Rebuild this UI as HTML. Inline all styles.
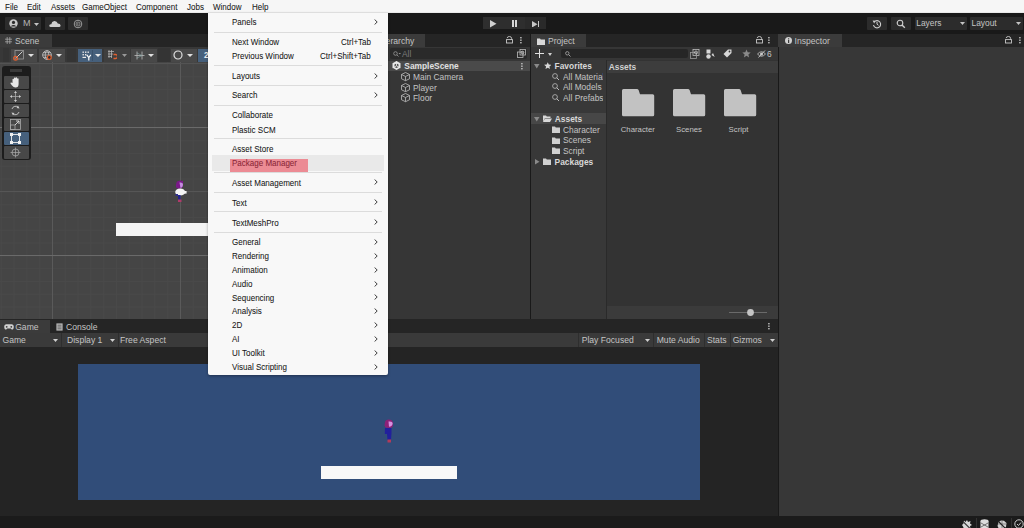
<!DOCTYPE html>
<html><head><meta charset="utf-8">
<style>
*{margin:0;padding:0;box-sizing:border-box}
html,body{width:1024px;height:528px;overflow:hidden;background:#191919;font-family:"Liberation Sans",sans-serif;font-size:8.4px;color:#c4c4c4}
.a{position:absolute}
.t{position:absolute;white-space:nowrap;line-height:10px}
.m{color:#151515;font-size:8.8px;transform:scaleX(0.91);transform-origin:0 0;-webkit-text-stroke:0.05px currentColor}
.mr{transform-origin:100% 0}
.sep{position:absolute;height:1px;background:#dcdcdc;left:6px;width:168px}
.ar{position:absolute;left:166px}
</style></head><body>
<div class="a" style="left:0px;top:0px;width:1024px;height:13px;background:#f6f6f6"></div>
<div class="a" style="left:0px;top:12px;width:1024px;height:1px;background:#e9e9e9"></div>
<div class="t m" style="left:5px;top:2px">File</div>
<div class="t m" style="left:27px;top:2px">Edit</div>
<div class="t m" style="left:51px;top:2px">Assets</div>
<div class="t m" style="left:82px;top:2px">GameObject</div>
<div class="t m" style="left:136px;top:2px">Component</div>
<div class="t m" style="left:187px;top:2px">Jobs</div>
<div class="t m" style="left:213px;top:2px">Window</div>
<div class="t m" style="left:252px;top:2px">Help</div>
<div class="a" style="left:0px;top:13px;width:1024px;height:21px;background:#191919"></div>
<div class="a" style="left:5px;top:17px;width:36px;height:13px;background:#2c2c2c;border-radius:1px"></div>
<svg class="a" style="left:9px;top:19px;" width="9" height="9" viewBox="0 0 9 9"><circle cx="4.5" cy="4.5" r="4.2" fill="#c8c8c8"/><circle cx="4.5" cy="3.4" r="1.6" fill="#2c2c2c"/><path d="M1.6 7.4 Q4.5 4.6 7.4 7.4" fill="#2c2c2c"/></svg>
<div class="t" style="left:23px;top:18px;color:#b4b4b4;font-size:9px">M</div>
<svg class="a" style="left:34px;top:22.5px;" width="5" height="3" viewBox="0 0 5 3"><path d="M0 0 H5 L2.5 3 Z" fill="#c4c4c4"/></svg>
<div class="a" style="left:44.5px;top:17px;width:20px;height:13px;background:#2c2c2c;border-radius:1px"></div>
<svg class="a" style="left:49px;top:19px;" width="12" height="9" viewBox="0 0 12 9"><path d="M1.5 8 Q0 8 0.3 6.3 Q0.8 5 2.3 5.2 Q2.6 2.4 5.3 2.1 Q8 2 8.8 4.6 Q11.5 4.6 11.6 6.5 Q11.6 8 10 8 Z" fill="#cfcfcf"/></svg>
<div class="a" style="left:68px;top:17px;width:20px;height:13px;background:#2c2c2c;border-radius:1px"></div>
<svg class="a" style="left:73px;top:18.5px;" width="10" height="10" viewBox="0 0 10 10"><circle cx="5" cy="5" r="3.8" fill="none" stroke="#9a9a9a" stroke-width="1"/><circle cx="5" cy="5" r="2" fill="none" stroke="#9a9a9a" stroke-width="0.8"/><path d="M4.3 4 L6 5 L4.3 6 Z" fill="#9a9a9a"/></svg>
<div class="a" style="left:483px;top:17px;width:21px;height:12px;background:#2e2e2e"></div>
<div class="a" style="left:504px;top:17px;width:21px;height:12px;background:#2e2e2e"></div>
<div class="a" style="left:525px;top:17px;width:21px;height:12px;background:#2a2a2a"></div>
<svg class="a" style="left:489.5px;top:20px;" width="7" height="7.5" viewBox="0 0 7 7.5"><path d="M0 0 L6.5 3.75 L0 7.5 Z" fill="#d0d0d0"/></svg>
<div class="a" style="left:512px;top:20.2px;width:2px;height:7px;background:#d6d6d6"></div>
<div class="a" style="left:515.3px;top:20.2px;width:2px;height:7px;background:#d6d6d6"></div>
<svg class="a" style="left:532px;top:20.5px;" width="6" height="6.5" viewBox="0 0 6 6.5"><path d="M0 0 L5.5 3.25 L0 6.5 Z" fill="#c8c8c8"/></svg>
<div class="a" style="left:538.2px;top:20.5px;width:1.3px;height:6.5px;background:#c8c8c8"></div>
<div class="a" style="left:867px;top:17px;width:20px;height:12.5px;background:#2c2c2c;border-radius:1px"></div>
<svg class="a" style="left:872px;top:18.5px;" width="10" height="10" viewBox="0 0 10 10"><path d="M2.2 3 A3.6 3.6 0 1 1 1.5 6" fill="none" stroke="#cfcfcf" stroke-width="1.1"/><path d="M0.6 1.6 L3.4 1.8 L2.2 4.4 Z" fill="#cfcfcf"/><path d="M5 3 V5.2 L6.5 6.3" fill="none" stroke="#cfcfcf" stroke-width="1"/></svg>
<div class="a" style="left:891px;top:17px;width:20px;height:12.5px;background:#2c2c2c;border-radius:1px"></div>
<svg class="a" style="left:896px;top:18.5px;" width="10" height="10" viewBox="0 0 10 10"><circle cx="4" cy="4" r="2.8" fill="none" stroke="#cfcfcf" stroke-width="1.1"/><path d="M6 6 L8.8 8.8" stroke="#cfcfcf" stroke-width="1.4"/></svg>
<div class="a" style="left:914.5px;top:17px;width:52px;height:12.5px;background:#2c2c2c;border-radius:1px"></div>
<div class="t" style="left:916.3px;top:18.3px;color:#c4c4c4;font-size:8.4px">Layers</div>
<svg class="a" style="left:959.5px;top:22px;" width="5" height="3" viewBox="0 0 5 3"><path d="M0 0 H5 L2.5 3 Z" fill="#c4c4c4"/></svg>
<div class="a" style="left:970.3px;top:17px;width:52.5px;height:12.5px;background:#2c2c2c;border-radius:1px"></div>
<div class="t" style="left:971.5px;top:18.3px;color:#c4c4c4;font-size:8.4px">Layout</div>
<svg class="a" style="left:1015.5px;top:22px;" width="5" height="3" viewBox="0 0 5 3"><path d="M0 0 H5 L2.5 3 Z" fill="#c4c4c4"/></svg>
<div class="a" style="left:0px;top:34px;width:362px;height:13px;background:#252525"></div>
<div class="a" style="left:0px;top:34px;width:51.5px;height:13px;background:#3b3b3b"></div>
<svg class="a" style="left:5px;top:37px;" width="7" height="7" viewBox="0 0 7 7"><path d="M2.2 0 V7 M4.8 0 V7 M0 2.2 H7 M0 4.8 H7" stroke="#bdbdbd" stroke-width="0.65"/></svg>
<div class="t" style="left:15px;top:35.6px;color:#c4c4c4;font-size:8.6px">Scene</div>
<div class="a" style="left:0px;top:47px;width:362px;height:15px;background:#383838"></div>
<div class="a" style="left:3px;top:48px;width:6px;height:14px;background:#343434"></div>
<div class="a" style="left:11px;top:48.6px;width:26px;height:13px;background:#484848"></div>
<svg class="a" style="left:13px;top:50px;" width="11" height="11" viewBox="0 0 11 11"><rect x="2" y="0.5" width="8.5" height="8.5" fill="none" stroke="#9b9b9b" stroke-width="0.8"/><path d="M3 8 L9.5 1.5" stroke="#dcdcdc" stroke-width="0.9"/><circle cx="2.6" cy="8.3" r="1.9" fill="none" stroke="#e06030" stroke-width="1.2"/></svg>
<svg class="a" style="left:28px;top:53.5px;" width="6" height="3" viewBox="0 0 6 3"><path d="M0 0 H6 L3.0 3 Z" fill="#e0e0e0"/></svg>
<div class="a" style="left:38.6px;top:48.6px;width:26px;height:13px;background:#484848"></div>
<svg class="a" style="left:41.5px;top:50px;" width="11" height="11" viewBox="0 0 11 11"><circle cx="5" cy="5" r="4.3" fill="none" stroke="#d0d0d0" stroke-width="0.8"/><ellipse cx="5" cy="5" rx="1.8" ry="4.3" fill="none" stroke="#d0d0d0" stroke-width="0.7"/><path d="M0.7 5 H9.3 M1.5 2.6 H8.5 M1.5 7.4 H8.5" stroke="#d0d0d0" stroke-width="0.6"/><circle cx="7.3" cy="7.4" r="1.9" fill="#2a2a2a" stroke="#e06030" stroke-width="1.2"/></svg>
<svg class="a" style="left:56px;top:53.5px;" width="6" height="3" viewBox="0 0 6 3"><path d="M0 0 H6 L3.0 3 Z" fill="#e0e0e0"/></svg>
<div class="a" style="left:67px;top:48px;width:9px;height:14px;background:#343434"></div>
<div class="a" style="left:78px;top:48.6px;width:24px;height:13px;background:#46607c"></div>
<div class="a" style="left:92px;top:49.5px;width:0.6px;height:11px;background:#3a526c"></div>
<svg class="a" style="left:81.5px;top:50.5px;" width="10" height="10" viewBox="0 0 10 10"><g fill="#e8e8e8"><rect x="0.5" y="0.5" width="1.4" height="1.4"/><rect x="3" y="0.5" width="1.4" height="1.4"/><rect x="5.5" y="0.5" width="1.4" height="1.4"/><rect x="0.5" y="3" width="1.4" height="1.4"/><rect x="3" y="3" width="1.4" height="1.4"/><rect x="0.5" y="5.8" width="3.5" height="1.2"/></g><path d="M4.8 3.8 L6.8 6.5 L8.8 3.8 M6.8 6.5 V9.5" fill="none" stroke="#fff" stroke-width="1.2"/></svg>
<svg class="a" style="left:94.5px;top:53.5px;" width="6" height="3" viewBox="0 0 6 3"><path d="M0 0 H6 L3.0 3 Z" fill="#e8e8e8"/></svg>
<div class="a" style="left:104px;top:48.6px;width:25.5px;height:13px;background:#3f3f3f"></div>
<svg class="a" style="left:107px;top:50px;" width="10" height="10" viewBox="0 0 10 10"><path d="M1 1.5 H7 M1 4 H6 M1 6.5 H5 M2 0 V8 M4.5 0 V8" stroke="#bbb" stroke-width="0.7"/><path d="M6.5 4.5 H8.5 A1.8 1.8 0 0 1 8.5 8.5 H6.5" fill="none" stroke="#e06030" stroke-width="1.3"/></svg>
<svg class="a" style="left:122px;top:54px;" width="5" height="3" viewBox="0 0 5 3"><path d="M0 0 H5 L2.5 3 Z" fill="#999"/></svg>
<div class="a" style="left:131px;top:48.6px;width:26px;height:13px;background:#484848"></div>
<svg class="a" style="left:133.5px;top:50.5px;" width="11" height="9" viewBox="0 0 11 9"><path d="M0.5 4.5 H10.5 M3 0.5 V8.5 M8 0.5 V8.5" stroke="#bbb" stroke-width="0.8"/><path d="M3 2 L8 4.5 L3 7" fill="none" stroke="#8aa" stroke-width="0.6"/></svg>
<svg class="a" style="left:148px;top:53.5px;" width="6" height="3" viewBox="0 0 6 3"><path d="M0 0 H6 L3.0 3 Z" fill="#e0e0e0"/></svg>
<div class="a" style="left:158px;top:48px;width:12px;height:14px;background:#343434"></div>
<div class="a" style="left:170.5px;top:48.6px;width:26px;height:13px;background:#484848"></div>
<svg class="a" style="left:172.5px;top:50px;" width="10" height="10" viewBox="0 0 10 10"><circle cx="5" cy="5" r="4" fill="none" stroke="#e0e0e0" stroke-width="1.2"/></svg>
<svg class="a" style="left:187px;top:53.5px;" width="6" height="3" viewBox="0 0 6 3"><path d="M0 0 H6 L3.0 3 Z" fill="#e0e0e0"/></svg>
<div class="a" style="left:198px;top:48.6px;width:12px;height:13px;background:#46607c"></div>
<div class="t" style="left:204px;top:50px;color:#f0f0f0;font-size:8.4px;font-weight:bold">2D</div>
<div class="a" style="left:0px;top:62px;width:362px;height:257px;background:#454545;background-image:linear-gradient(to right,#494949 1px,transparent 1px),linear-gradient(to bottom,#494949 1px,transparent 1px);background-size:12.8px 12.8px;background-position:0.8px 1.4px"></div>
<div class="a" style="left:52px;top:62px;width:1px;height:257px;background:#5a5a5a"></div>
<div class="a" style="left:180px;top:62px;width:1px;height:257px;background:#5a5a5a"></div>
<div class="a" style="left:308px;top:62px;width:1px;height:257px;background:#5a5a5a"></div>
<div class="a" style="left:0px;top:63px;width:362px;height:1px;background:#535353"></div>
<div class="a" style="left:0px;top:127px;width:362px;height:1px;background:#6a6a6a"></div>
<div class="a" style="left:0px;top:191px;width:362px;height:1px;background:#565656"></div>
<div class="a" style="left:0px;top:255px;width:362px;height:1px;background:#6a6a6a"></div>
<div class="a" style="left:116px;top:223px;width:246px;height:13px;background:#f4f4f4"></div>
<svg class="a" style="left:174.5px;top:179.5px;" width="12" height="23" viewBox="0 0 12 23"><path d="M1.5 2.5 Q2 0.5 4 1 L5.5 0 L6.5 1.2 L8 0.5 L8 6 Q7.5 8.5 4 8.8 Q1 8.8 0.8 5.5 Z" fill="#7a1a88"/><path d="M4.5 2.5 Q7.5 2 8 4 Q8 7.5 5.5 8 Z" fill="#c48ce0"/><ellipse cx="5.2" cy="12" rx="5" ry="3.6" fill="#f4f4f4"/><rect x="9" y="11" width="2.6" height="2.6" fill="#f4f4f4"/><rect x="0.5" y="14" width="2.5" height="2" fill="#30308a"/><rect x="3" y="15" width="2.6" height="5" fill="#22228a"/><rect x="3" y="19.5" width="3.5" height="2.5" fill="#b03a6a"/></svg>
<div class="a" style="left:2px;top:65.5px;width:28.5px;height:94px;background:#1c1c1c;border-radius:3px"></div>
<div class="a" style="left:10px;top:69px;width:12px;height:3px;background:#3a3a3a"></div>
<div class="a" style="left:4px;top:76px;width:24.5px;height:13px;background:#484848;border-radius:1px"></div>
<div class="a" style="left:4px;top:90px;width:24.5px;height:13px;background:#484848;border-radius:1px"></div>
<div class="a" style="left:4px;top:104px;width:24.5px;height:13px;background:#484848;border-radius:1px"></div>
<div class="a" style="left:4px;top:118px;width:24.5px;height:13px;background:#484848;border-radius:1px"></div>
<div class="a" style="left:4px;top:132px;width:24.5px;height:13px;background:#46607c;border-radius:1px"></div>
<div class="a" style="left:4px;top:146px;width:24.5px;height:13px;background:#484848;border-radius:1px"></div>
<svg class="a" style="left:10px;top:77px;" width="12" height="11" viewBox="0 0 12 11"><path d="M2.5 6 V2.5 Q2.5 1.8 3.2 1.8 Q3.9 1.8 3.9 2.5 V5 V1.5 Q3.9 0.6 4.7 0.6 Q5.5 0.6 5.5 1.5 V5 V1.2 Q5.5 0.3 6.3 0.3 Q7.1 0.3 7.1 1.2 V5 V2 Q7.1 1.3 7.8 1.3 Q8.6 1.3 8.6 2 V7 Q8.6 10.5 5.5 10.5 Q3.5 10.5 2 8.5 L0.5 6.5 Q0.2 5.5 1.2 5.5 Z" fill="#e8e8e8"/></svg>
<svg class="a" style="left:10px;top:91px;" width="11" height="11" viewBox="0 0 11 11"><path d="M5.5 0.5 V10.5 M0.5 5.5 H10.5" stroke="#aaa" stroke-width="0.8"/><path d="M5.5 0 L4 2 H7 Z M5.5 11 L4 9 H7 Z M0 5.5 L2 4 V7 Z M11 5.5 L9 4 V7 Z" fill="#ccc"/></svg>
<svg class="a" style="left:10px;top:105px;" width="11" height="11" viewBox="0 0 11 11"><path d="M2 4 A3.8 3.8 0 0 1 8.5 2.5 M9 7 A3.8 3.8 0 0 1 2.5 8.5" fill="none" stroke="#c8c8c8" stroke-width="0.9"/><path d="M8 0.5 L9.5 3.5 L6.5 3 Z M3 10.5 L1.5 7.5 L4.5 8 Z" fill="#c8c8c8"/></svg>
<svg class="a" style="left:10px;top:119px;" width="11" height="11" viewBox="0 0 11 11"><rect x="0.5" y="0.5" width="10" height="10" fill="none" stroke="#aaa" stroke-width="0.8"/><rect x="0.5" y="6" width="4.5" height="4.5" fill="none" stroke="#aaa" stroke-width="0.8"/><path d="M5 6 L9 2 M6 2 H9 V5" fill="none" stroke="#ddd" stroke-width="0.9"/></svg>
<svg class="a" style="left:10px;top:133px;" width="11" height="11" viewBox="0 0 11 11"><rect x="1.5" y="1.5" width="8" height="8" fill="none" stroke="#f0f0f0" stroke-width="0.9"/><rect x="0" y="0" width="3" height="3" fill="#f0f0f0"/><rect x="8" y="0" width="3" height="3" fill="#f0f0f0"/><rect x="0" y="8" width="3" height="3" fill="#f0f0f0"/><rect x="8" y="8" width="3" height="3" fill="#f0f0f0"/></svg>
<svg class="a" style="left:10px;top:147px;" width="11" height="11" viewBox="0 0 11 11"><circle cx="5.5" cy="5.5" r="3.5" fill="none" stroke="#aaa" stroke-width="0.8"/><path d="M5.5 0.5 V10.5 M0.5 5.5 H10.5" stroke="#aaa" stroke-width="0.7"/></svg>
<div class="a" style="left:362px;top:34px;width:168px;height:13px;background:#252525"></div>
<div class="a" style="left:362px;top:34px;width:63px;height:13px;background:#3b3b3b"></div>
<div class="t" style="left:377.5px;top:35.6px;color:#c4c4c4;font-size:8.6px">Hierarchy</div>
<svg class="a" style="left:506px;top:36px;" width="7" height="8" viewBox="0 0 7 8"><path d="M1.1 2.1 Q1.4 0.5 3.4 0.5 Q5.6 0.5 5.6 2.4 V3.8" fill="none" stroke="#c8c8c8" stroke-width="0.9"/><rect x="0.5" y="3.6" width="6" height="3.4" fill="none" stroke="#c8c8c8" stroke-width="0.9"/></svg>
<svg class="a" style="left:520.3px;top:37px;" width="2" height="7" viewBox="0 0 2 7"><rect x="0.2" y="0" width="1.4" height="1.4" fill="#c8c8c8"/><rect x="0.2" y="2.5" width="1.4" height="1.4" fill="#c8c8c8"/><rect x="0.2" y="5" width="1.4" height="1.4" fill="#c8c8c8"/></svg>
<div class="a" style="left:362px;top:47px;width:168px;height:272px;background:#363636"></div>
<div class="a" style="left:390px;top:48.4px;width:137px;height:10.2px;background:#2a2a2a;border-radius:2px"></div>
<svg class="a" style="left:393px;top:50.5px;" width="8" height="6" viewBox="0 0 8 6"><circle cx="2.5" cy="2.5" r="1.8" fill="none" stroke="#999" stroke-width="0.8"/><path d="M4 4 L5.5 5.5" stroke="#999" stroke-width="0.8"/><path d="M5.5 2 H8 L6.75 3.3 Z" fill="#999"/></svg>
<div class="t" style="left:402px;top:48.6px;color:#7a7a7a;font-size:8.4px">All</div>
<svg class="a" style="left:517px;top:49.2px;" width="9" height="9" viewBox="0 0 9 9"><rect x="3" y="0.5" width="5.5" height="5.5" fill="none" stroke="#bbb" stroke-width="0.8"/><rect x="0.5" y="3" width="5.5" height="5.5" fill="none" stroke="#bbb" stroke-width="0.8"/><circle cx="5.5" cy="3.5" r="1.3" fill="none" stroke="#e0e0e0" stroke-width="0.7"/></svg>
<div class="a" style="left:362px;top:60.5px;width:168px;height:10.2px;background:#4a4a4a"></div>
<svg class="a" style="left:391.8px;top:61.2px;" width="9" height="9" viewBox="0 0 9 9"><path d="M4.5 0 L8.5 2.2 V6.8 L4.5 9 L0.5 6.8 V2.2 Z" fill="#e8e8e8"/><path d="M4.5 2.5 L6.5 3.6 V5.9 L4.5 7 L2.5 5.9 V3.6 Z" fill="#4a4a4a"/><path d="M4.5 4.8 V0.5 M4.5 4.8 L0.8 6.8 M4.5 4.8 L8.2 6.8" stroke="#e8e8e8" stroke-width="0.9"/></svg>
<div class="t" style="left:404.3px;top:60.6px;color:#e0e0e0;font-size:8.4px;font-weight:bold">SampleScene</div>
<svg class="a" style="left:520.5px;top:62.5px;" width="2" height="7" viewBox="0 0 2 7"><rect x="0.2" y="0" width="1.4" height="1.4" fill="#c8c8c8"/><rect x="0.2" y="2.5" width="1.4" height="1.4" fill="#c8c8c8"/><rect x="0.2" y="5" width="1.4" height="1.4" fill="#c8c8c8"/></svg>
<svg class="a" style="left:401px;top:72.4px;" width="9" height="9.2" viewBox="0 0 9 9.2"><path d="M4.5 0.5 L8.5 2.5 V6.8 L4.5 8.7 L0.5 6.8 V2.5 Z M0.5 2.5 L4.5 4.5 L8.5 2.5 M4.5 4.5 V8.7" fill="none" stroke="#bdbdbd" stroke-width="0.8"/></svg>
<div class="t" style="left:413px;top:72px;color:#c4c4c4;font-size:8.4px">Main Camera</div>
<svg class="a" style="left:401px;top:82.9px;" width="9" height="9.2" viewBox="0 0 9 9.2"><path d="M4.5 0.5 L8.5 2.5 V6.8 L4.5 8.7 L0.5 6.8 V2.5 Z M0.5 2.5 L4.5 4.5 L8.5 2.5 M4.5 4.5 V8.7" fill="none" stroke="#bdbdbd" stroke-width="0.8"/></svg>
<div class="t" style="left:413px;top:82.5px;color:#c4c4c4;font-size:8.4px">Player</div>
<svg class="a" style="left:401px;top:93.4px;" width="9" height="9.2" viewBox="0 0 9 9.2"><path d="M4.5 0.5 L8.5 2.5 V6.8 L4.5 8.7 L0.5 6.8 V2.5 Z M0.5 2.5 L4.5 4.5 L8.5 2.5 M4.5 4.5 V8.7" fill="none" stroke="#bdbdbd" stroke-width="0.8"/></svg>
<div class="t" style="left:413px;top:93px;color:#c4c4c4;font-size:8.4px">Floor</div>
<div class="a" style="left:531px;top:34px;width:247px;height:13px;background:#252525"></div>
<div class="a" style="left:531px;top:34px;width:55px;height:13px;background:#3b3b3b"></div>
<svg class="a" style="left:537px;top:37.5px;" width="8" height="7" viewBox="0 0 8 7"><path d="M0 0.5 H3 L3.8 1.5 H8 V7 H0 Z" fill="#d8d8d8"/></svg>
<div class="t" style="left:548px;top:35.6px;color:#c4c4c4;font-size:8.6px">Project</div>
<svg class="a" style="left:756px;top:36px;" width="7" height="8" viewBox="0 0 7 8"><path d="M1.1 2.1 Q1.4 0.5 3.4 0.5 Q5.6 0.5 5.6 2.4 V3.8" fill="none" stroke="#c8c8c8" stroke-width="0.9"/><rect x="0.5" y="3.6" width="6" height="3.4" fill="none" stroke="#c8c8c8" stroke-width="0.9"/></svg>
<svg class="a" style="left:768px;top:37px;" width="2" height="7" viewBox="0 0 2 7"><rect x="0.2" y="0" width="1.4" height="1.4" fill="#c8c8c8"/><rect x="0.2" y="2.5" width="1.4" height="1.4" fill="#c8c8c8"/><rect x="0.2" y="5" width="1.4" height="1.4" fill="#c8c8c8"/></svg>
<div class="a" style="left:531px;top:47px;width:247px;height:13px;background:#363636"></div>
<svg class="a" style="left:535px;top:49px;" width="9" height="9" viewBox="0 0 9 9"><path d="M4.5 0 V9 M0 4.5 H9" stroke="#e0e0e0" stroke-width="1"/></svg>
<svg class="a" style="left:548px;top:52.5px;" width="4" height="3" viewBox="0 0 4 3"><path d="M0 0 H4 L2.0 3 Z" fill="#d0d0d0"/></svg>
<div class="a" style="left:561px;top:48.5px;width:127px;height:9.8px;background:#262626;border-radius:2px"></div>
<svg class="a" style="left:564.5px;top:50.5px;" width="6" height="6" viewBox="0 0 6 6"><circle cx="2.3" cy="2.3" r="1.7" fill="none" stroke="#aaa" stroke-width="0.8"/><path d="M3.6 3.6 L5.5 5.5" stroke="#aaa" stroke-width="0.9"/></svg>
<svg class="a" style="left:690px;top:48.8px;" width="10" height="10" viewBox="0 0 10 10"><rect x="3" y="0.5" width="6" height="6" fill="none" stroke="#bbb" stroke-width="0.8"/><rect x="0.5" y="3.5" width="6" height="6" fill="none" stroke="#999" stroke-width="0.8"/><circle cx="6" cy="3.5" r="1.5" fill="none" stroke="#ddd" stroke-width="0.7"/></svg>
<svg class="a" style="left:706px;top:48.5px;" width="9" height="10" viewBox="0 0 9 10"><rect x="0.5" y="0.5" width="4" height="4" fill="#d8d8d8"/><circle cx="2.5" cy="7.5" r="2.2" fill="#d8d8d8"/><path d="M5.5 6 L7 4 L8.7 8 Z" fill="#d8d8d8"/></svg>
<svg class="a" style="left:723px;top:49px;" width="9" height="9" viewBox="0 0 9 9"><path d="M0.5 5 L5 0.5 H8.5 V4 L4 8.5 Z" fill="#d8d8d8"/><circle cx="6.5" cy="2.5" r="0.9" fill="#363636"/></svg>
<svg class="a" style="left:742px;top:49px;" width="9" height="9" viewBox="0 0 9 9"><path d="M4.5 0.5 L5.7 3.3 L8.7 3.5 L6.4 5.4 L7.1 8.4 L4.5 6.8 L1.9 8.4 L2.6 5.4 L0.3 3.5 L3.3 3.3 Z" fill="#8a8a8a"/></svg>
<svg class="a" style="left:757px;top:49.5px;" width="10" height="8" viewBox="0 0 10 8"><path d="M0.5 4 Q4.5 -0.5 8.5 4 Q4.5 8.5 0.5 4 Z" fill="none" stroke="#c8c8c8" stroke-width="0.8"/><circle cx="4.5" cy="4" r="1.5" fill="#c8c8c8"/><path d="M1.5 7.5 L8 0.5" stroke="#c8c8c8" stroke-width="0.9"/></svg>
<div class="t" style="left:767px;top:48.7px;color:#c4c4c4;font-size:8.4px">6</div>
<div class="a" style="left:531px;top:60px;width:75px;height:259px;background:#383838"></div>
<div class="a" style="left:606px;top:60px;width:1px;height:259px;background:#2a2a2a"></div>
<svg class="a" style="left:534px;top:64px;" width="6" height="5" viewBox="0 0 6 5"><path d="M0 0 H5.5 L2.75 4.5 Z" fill="#8a8a8a"/></svg>
<svg class="a" style="left:543.5px;top:62.3px;" width="7.5" height="7.5" viewBox="0 0 7.5 7.5"><path d="M3.75 0.2 L4.8 2.6 L7.4 2.8 L5.4 4.5 L6 7.1 L3.75 5.7 L1.5 7.1 L2.1 4.5 L0.1 2.8 L2.7 2.6 Z" fill="#d8d8d8"/></svg>
<div class="t" style="left:554.6px;top:61.2px;color:#d8d8d8;font-size:8.4px;font-weight:bold">Favorites</div>
<svg class="a" style="left:552px;top:72.8px;" width="8" height="8" viewBox="0 0 8 8"><circle cx="3" cy="3" r="2.4" fill="none" stroke="#bbb" stroke-width="0.8"/><path d="M4.7 4.7 L7 7" stroke="#bbb" stroke-width="1"/></svg>
<div class="t" style="left:563px;top:71.8px;width:40px;overflow:hidden;color:#c4c4c4">All Materials</div>
<svg class="a" style="left:552px;top:83.3px;" width="8" height="8" viewBox="0 0 8 8"><circle cx="3" cy="3" r="2.4" fill="none" stroke="#bbb" stroke-width="0.8"/><path d="M4.7 4.7 L7 7" stroke="#bbb" stroke-width="1"/></svg>
<div class="t" style="left:563px;top:82.3px;width:40px;overflow:hidden;color:#c4c4c4">All Models</div>
<svg class="a" style="left:552px;top:93.7px;" width="8" height="8" viewBox="0 0 8 8"><circle cx="3" cy="3" r="2.4" fill="none" stroke="#bbb" stroke-width="0.8"/><path d="M4.7 4.7 L7 7" stroke="#bbb" stroke-width="1"/></svg>
<div class="t" style="left:563px;top:92.7px;width:40px;overflow:hidden;color:#c4c4c4">All Prefabs</div>
<div class="a" style="left:531px;top:113.2px;width:75px;height:11.2px;background:#474747"></div>
<svg class="a" style="left:534px;top:117px;" width="6" height="5" viewBox="0 0 6 5"><path d="M0 0 H5.5 L2.75 4.5 Z" fill="#8a8a8a"/></svg>
<svg class="a" style="left:543px;top:114.5px;" width="9" height="7" viewBox="0 0 9 7"><path d="M0 0.5 H3 L3.8 1.5 H7.5 V3 H2 L0 7 Z" fill="#d8d8d8"/><path d="M2 3.5 H9 L7 7 H0 Z" fill="#d8d8d8"/></svg>
<div class="t" style="left:554.8px;top:113.8px;color:#d8d8d8;font-size:8.4px;font-weight:bold">Assets</div>
<svg class="a" style="left:552px;top:126.0px;" width="8" height="7" viewBox="0 0 8 7"><path d="M0 0.5 H3 L3.8 1.5 H8 V7 H0 Z" fill="#d0d0d0"/></svg>
<div class="t" style="left:563px;top:124.5px;color:#c4c4c4;font-size:8.4px">Character</div>
<svg class="a" style="left:552px;top:136.7px;" width="8" height="7" viewBox="0 0 8 7"><path d="M0 0.5 H3 L3.8 1.5 H8 V7 H0 Z" fill="#d0d0d0"/></svg>
<div class="t" style="left:563px;top:135.2px;color:#c4c4c4;font-size:8.4px">Scenes</div>
<svg class="a" style="left:552px;top:147.3px;" width="8" height="7" viewBox="0 0 8 7"><path d="M0 0.5 H3 L3.8 1.5 H8 V7 H0 Z" fill="#d0d0d0"/></svg>
<div class="t" style="left:563px;top:145.8px;color:#c4c4c4;font-size:8.4px">Script</div>
<svg class="a" style="left:534.5px;top:159px;" width="5" height="6" viewBox="0 0 5 6"><path d="M0 0 V5.5 L4.5 2.75 Z" fill="#8a8a8a"/></svg>
<svg class="a" style="left:543px;top:158.2px;" width="8" height="7" viewBox="0 0 8 7"><path d="M0 0.5 H3 L3.8 1.5 H8 V7 H0 Z" fill="#d0d0d0"/></svg>
<div class="t" style="left:554.6px;top:156.7px;color:#d8d8d8;font-size:8.4px;font-weight:bold">Packages</div>
<div class="a" style="left:607px;top:60px;width:171px;height:259px;background:#333333"></div>
<div class="a" style="left:607px;top:60.5px;width:171px;height:12.7px;background:#3d3d3d"></div>
<div class="t" style="left:608.7px;top:61.8px;color:#d0d0d0;font-size:8.4px;font-weight:bold">Assets</div>
<svg class="a" style="left:621.5px;top:89px;" width="33" height="27.5" viewBox="0 0 33 27.5"><path d="M1.5 0 H15 Q16 0 16.6 1 L18 5.2 H30.7 Q32.2 5.2 32.2 6.7 V25.8 Q32.2 27.3 30.7 27.3 H1.5 Q0 27.3 0 25.8 V1.5 Q0 0 1.5 0 Z" fill="#c2c2c2"/></svg>
<div class="t" style="left:620.7px;top:125px;color:#c4c4c4;font-size:7.8px">Character</div>
<svg class="a" style="left:672.8px;top:89px;" width="33" height="27.5" viewBox="0 0 33 27.5"><path d="M1.5 0 H15 Q16 0 16.6 1 L18 5.2 H30.7 Q32.2 5.2 32.2 6.7 V25.8 Q32.2 27.3 30.7 27.3 H1.5 Q0 27.3 0 25.8 V1.5 Q0 0 1.5 0 Z" fill="#c2c2c2"/></svg>
<div class="t" style="left:676px;top:125px;color:#c4c4c4;font-size:7.8px">Scenes</div>
<svg class="a" style="left:723.5px;top:89px;" width="33" height="27.5" viewBox="0 0 33 27.5"><path d="M1.5 0 H15 Q16 0 16.6 1 L18 5.2 H30.7 Q32.2 5.2 32.2 6.7 V25.8 Q32.2 27.3 30.7 27.3 H1.5 Q0 27.3 0 25.8 V1.5 Q0 0 1.5 0 Z" fill="#c2c2c2"/></svg>
<div class="t" style="left:728.6px;top:125px;color:#c4c4c4;font-size:7.8px">Script</div>
<div class="a" style="left:607px;top:305.5px;width:171px;height:13.5px;background:#3b3b3b"></div>
<div class="a" style="left:729px;top:311.5px;width:38px;height:1px;background:#6a6a6a"></div>
<svg class="a" style="left:747px;top:308.5px;" width="7" height="7" viewBox="0 0 7 7"><circle cx="3.5" cy="3.5" r="3.4" fill="#c4c4c4"/></svg>
<div class="a" style="left:778px;top:34px;width:246px;height:13px;background:#252525"></div>
<div class="a" style="left:778px;top:34px;width:64px;height:13px;background:#3b3b3b"></div>
<svg class="a" style="left:784.5px;top:37px;" width="7" height="7" viewBox="0 0 7 7"><circle cx="3.5" cy="3.5" r="3.5" fill="#d0d0d0"/><rect x="3" y="3" width="1.2" height="3" fill="#3b3b3b"/><rect x="3" y="1.3" width="1.2" height="1.1" fill="#3b3b3b"/></svg>
<div class="t" style="left:794.5px;top:35.6px;color:#c4c4c4;font-size:8.6px">Inspector</div>
<svg class="a" style="left:1004.5px;top:36px;" width="7" height="8" viewBox="0 0 7 8"><path d="M1.1 2.1 Q1.4 0.5 3.4 0.5 Q5.6 0.5 5.6 2.4 V3.8" fill="none" stroke="#c8c8c8" stroke-width="0.9"/><rect x="0.5" y="3.6" width="6" height="3.4" fill="none" stroke="#c8c8c8" stroke-width="0.9"/></svg>
<svg class="a" style="left:1018.5px;top:36.8px;" width="2" height="7" viewBox="0 0 2 7"><rect x="0.2" y="0" width="1.4" height="1.4" fill="#c8c8c8"/><rect x="0.2" y="2.5" width="1.4" height="1.4" fill="#c8c8c8"/><rect x="0.2" y="5" width="1.4" height="1.4" fill="#c8c8c8"/></svg>
<div class="a" style="left:779px;top:47px;width:245px;height:469px;background:#373737"></div>
<div class="a" style="left:0px;top:319px;width:778px;height:14px;background:#252525"></div>
<div class="a" style="left:0px;top:320px;width:49.5px;height:13px;background:#3b3b3b"></div>
<svg class="a" style="left:4px;top:323.5px;" width="10" height="6" viewBox="0 0 10 6"><path d="M2.5 0.3 H7.5 Q9.8 0.3 9.8 3 Q9.8 5.7 8 5.7 L6.8 4.5 H3.2 L2 5.7 Q0.2 5.7 0.2 3 Q0.2 0.3 2.5 0.3 Z" fill="#d0d0d0"/><circle cx="2.7" cy="2.8" r="0.9" fill="#3b3b3b"/><circle cx="7.3" cy="2.8" r="0.9" fill="#3b3b3b"/></svg>
<div class="t" style="left:15.2px;top:321.5px;color:#c4c4c4;font-size:8.6px">Game</div>
<svg class="a" style="left:56px;top:322.5px;" width="7" height="8" viewBox="0 0 7 8"><rect x="0.4" y="0.4" width="6.2" height="7.2" fill="#b8b8b8"/><path d="M1.5 2.2 H5.5 M1.5 4 H5.5 M1.5 5.8 H5.5" stroke="#444" stroke-width="0.7"/></svg>
<div class="t" style="left:66px;top:321.5px;color:#c4c4c4;font-size:8.6px">Console</div>
<svg class="a" style="left:767.5px;top:323px;" width="2" height="7" viewBox="0 0 2 7"><rect x="0.2" y="0" width="1.4" height="1.4" fill="#c8c8c8"/><rect x="0.2" y="2.5" width="1.4" height="1.4" fill="#c8c8c8"/><rect x="0.2" y="5" width="1.4" height="1.4" fill="#c8c8c8"/></svg>
<div class="a" style="left:0px;top:333px;width:778px;height:14px;background:#3a3a3a"></div>
<div class="t" style="left:2.5px;top:335px;color:#c4c4c4;font-size:8.6px">Game</div>
<svg class="a" style="left:53px;top:339px;" width="5" height="3" viewBox="0 0 5 3"><path d="M0 0 H5 L2.5 3 Z" fill="#d0d0d0"/></svg>
<div class="a" style="left:61px;top:333px;width:1px;height:14px;background:#2e2e2e"></div>
<div class="t" style="left:67px;top:335px;color:#c4c4c4;font-size:8.6px">Display 1</div>
<svg class="a" style="left:110px;top:339px;" width="5" height="3" viewBox="0 0 5 3"><path d="M0 0 H5 L2.5 3 Z" fill="#d0d0d0"/></svg>
<div class="a" style="left:118px;top:333px;width:1px;height:14px;background:#2e2e2e"></div>
<div class="t" style="left:120px;top:335px;color:#c4c4c4;font-size:8.6px">Free Aspect</div>
<div class="a" style="left:578px;top:333px;width:1px;height:14px;background:#2e2e2e"></div>
<div class="t" style="left:581.7px;top:335px;color:#c4c4c4;font-size:8.6px">Play Focused</div>
<svg class="a" style="left:644.5px;top:339px;" width="5" height="3" viewBox="0 0 5 3"><path d="M0 0 H5 L2.5 3 Z" fill="#d0d0d0"/></svg>
<div class="a" style="left:652.6px;top:333px;width:1px;height:14px;background:#2e2e2e"></div>
<div class="t" style="left:656.7px;top:335px;color:#c4c4c4;font-size:8.6px">Mute Audio</div>
<div class="a" style="left:704px;top:333px;width:1px;height:14px;background:#2e2e2e"></div>
<div class="t" style="left:707px;top:335px;color:#c4c4c4;font-size:8.6px">Stats</div>
<div class="a" style="left:730.4px;top:333px;width:1px;height:14px;background:#2e2e2e"></div>
<div class="t" style="left:732.7px;top:335px;color:#c4c4c4;font-size:8.6px">Gizmos</div>
<svg class="a" style="left:769.5px;top:339px;" width="5" height="3" viewBox="0 0 5 3"><path d="M0 0 H5 L2.5 3 Z" fill="#d0d0d0"/></svg>
<div class="a" style="left:0px;top:347px;width:778px;height:169px;background:#242424"></div>
<div class="a" style="left:78px;top:364px;width:622px;height:136px;background:#314d79"></div>
<div class="a" style="left:321px;top:466px;width:136px;height:13px;background:#f8f8f8"></div>
<svg class="a" style="left:383.5px;top:419.2px;" width="10" height="25" viewBox="0 0 10 25"><path d="M1 3 Q1.5 0.5 4.5 0.5 Q8.5 0.3 8.8 3.5 V7.5 Q8 9 4.5 9 Q1 9 0.5 6.5 Z" fill="#8c2078"/><path d="M4.5 2.5 Q8.6 2 8.6 4.5 Q8.5 7.5 5 7.8 Z" fill="#d890e0"/><path d="M1 9 H7.5 V14 L7 21 H3.5 L3 15 H0.8 Z" fill="#22209c"/><rect x="3.5" y="20.5" width="3.5" height="3" fill="#b23a5a"/></svg>
<div class="a" style="left:0px;top:516px;width:1024px;height:12px;background:#1b1b1b"></div>
<svg class="a" style="left:962px;top:519.5px;" width="10" height="9" viewBox="0 0 10 9"><path d="M2 0.5 L3.5 2 L5 0 L6 2 L8.5 1 L8 3.5 L10 5 L8 6 L8.5 9 H2 L1 6.5 L0 5 L1.5 3.5 Z" fill="#d8d8d8"/><path d="M1 1.5 L8.5 9" stroke="#3a3a3a" stroke-width="1.1"/></svg>
<div class="a" style="left:976px;top:518px;width:1px;height:10px;background:#333"></div>
<svg class="a" style="left:979.5px;top:519px;" width="9" height="9" viewBox="0 0 9 9"><ellipse cx="4.5" cy="2" rx="4" ry="1.7" fill="#ddd"/><rect x="0.5" y="2" width="8" height="7" fill="#ddd"/><path d="M1 4 L8 8 M8 4 L1 8" stroke="#555" stroke-width="0.8"/></svg>
<svg class="a" style="left:997px;top:519.5px;" width="10" height="9" viewBox="0 0 10 9"><path d="M1.5 2 L4 0.5 L7 0.8 L9.5 3 L9 7 L6 9 H2 L0.5 6 Z" fill="#d0d0d0"/><path d="M1 4 H9 M5 0.5 V9" stroke="#555" stroke-width="0.6"/><path d="M0.5 0.5 L9.5 9.5" stroke="#222" stroke-width="1.1"/></svg>
<div class="a" style="left:1011px;top:518px;width:1px;height:10px;background:#333"></div>
<svg class="a" style="left:1014px;top:518.5px;" width="10" height="10" viewBox="0 0 10 10"><circle cx="5" cy="5" r="4.2" fill="none" stroke="#ccc" stroke-width="1"/><path d="M3 5 L4.5 6.5 L7 3.5" fill="none" stroke="#ccc" stroke-width="1"/></svg>
<div class="a" style="left:208px;top:13px;width:180px;height:362px;background:#f8f8f8;border-radius:0 0 2px 2px;box-shadow:0 1px 3px rgba(0,0,0,0.35)">
<div class="a" style="left:4px;top:142px;width:172px;height:15.5px;background:#e9e9e9"></div>
<div class="a" style="left:22px;top:145.5px;width:78px;height:14px;background:#ec8b94"></div>
<div class="sep" style="top:18.8px"></div>
<div class="sep" style="top:52.3px"></div>
<div class="sep" style="top:71.8px"></div>
<div class="sep" style="top:91.7px"></div>
<div class="sep" style="top:125.0px"></div>
<div class="sep" style="top:159.3px"></div>
<div class="sep" style="top:178.6px"></div>
<div class="sep" style="top:198.0px"></div>
<div class="sep" style="top:218.6px"></div>
<div class="t m" style="left:24px;top:4.2px">Panels</div>
<svg class="ar" style="top:6.0px" width="4" height="6" viewBox="0 0 4 6"><path d="M0.6 0.5 L3.2 3 L0.6 5.5" fill="none" stroke="#333" stroke-width="0.95"/></svg>
<div class="t m" style="left:24px;top:24.1px">Next Window</div>
<div class="t m mr" style="top:24.1px;right:17px">Ctrl+Tab</div>
<div class="t m" style="left:24px;top:38.0px">Previous Window</div>
<div class="t m mr" style="top:38.0px;right:17px">Ctrl+Shift+Tab</div>
<div class="t m" style="left:24px;top:57.8px">Layouts</div>
<svg class="ar" style="top:59.6px" width="4" height="6" viewBox="0 0 4 6"><path d="M0.6 0.5 L3.2 3 L0.6 5.5" fill="none" stroke="#333" stroke-width="0.95"/></svg>
<div class="t m" style="left:24px;top:77.3px">Search</div>
<svg class="ar" style="top:79.1px" width="4" height="6" viewBox="0 0 4 6"><path d="M0.6 0.5 L3.2 3 L0.6 5.5" fill="none" stroke="#333" stroke-width="0.95"/></svg>
<div class="t m" style="left:24px;top:97.3px">Collaborate</div>
<div class="t m" style="left:24px;top:111.5px">Plastic SCM</div>
<div class="t m" style="left:24px;top:131.1px">Asset Store</div>
<div class="t m" style="left:24px;top:145.3px;color:#8a2636">Package Manager</div>
<div class="t m" style="left:24px;top:164.5px">Asset Management</div>
<svg class="ar" style="top:166.3px" width="4" height="6" viewBox="0 0 4 6"><path d="M0.6 0.5 L3.2 3 L0.6 5.5" fill="none" stroke="#333" stroke-width="0.95"/></svg>
<div class="t m" style="left:24px;top:184.5px">Text</div>
<svg class="ar" style="top:186.3px" width="4" height="6" viewBox="0 0 4 6"><path d="M0.6 0.5 L3.2 3 L0.6 5.5" fill="none" stroke="#333" stroke-width="0.95"/></svg>
<div class="t m" style="left:24px;top:204.5px">TextMeshPro</div>
<svg class="ar" style="top:206.3px" width="4" height="6" viewBox="0 0 4 6"><path d="M0.6 0.5 L3.2 3 L0.6 5.5" fill="none" stroke="#333" stroke-width="0.95"/></svg>
<div class="t m" style="left:24px;top:224.0px">General</div>
<svg class="ar" style="top:225.8px" width="4" height="6" viewBox="0 0 4 6"><path d="M0.6 0.5 L3.2 3 L0.6 5.5" fill="none" stroke="#333" stroke-width="0.95"/></svg>
<div class="t m" style="left:24px;top:238.0px">Rendering</div>
<svg class="ar" style="top:239.8px" width="4" height="6" viewBox="0 0 4 6"><path d="M0.6 0.5 L3.2 3 L0.6 5.5" fill="none" stroke="#333" stroke-width="0.95"/></svg>
<div class="t m" style="left:24px;top:252.0px">Animation</div>
<svg class="ar" style="top:253.8px" width="4" height="6" viewBox="0 0 4 6"><path d="M0.6 0.5 L3.2 3 L0.6 5.5" fill="none" stroke="#333" stroke-width="0.95"/></svg>
<div class="t m" style="left:24px;top:266.0px">Audio</div>
<svg class="ar" style="top:267.8px" width="4" height="6" viewBox="0 0 4 6"><path d="M0.6 0.5 L3.2 3 L0.6 5.5" fill="none" stroke="#333" stroke-width="0.95"/></svg>
<div class="t m" style="left:24px;top:279.5px">Sequencing</div>
<svg class="ar" style="top:281.3px" width="4" height="6" viewBox="0 0 4 6"><path d="M0.6 0.5 L3.2 3 L0.6 5.5" fill="none" stroke="#333" stroke-width="0.95"/></svg>
<div class="t m" style="left:24px;top:293.0px">Analysis</div>
<svg class="ar" style="top:294.8px" width="4" height="6" viewBox="0 0 4 6"><path d="M0.6 0.5 L3.2 3 L0.6 5.5" fill="none" stroke="#333" stroke-width="0.95"/></svg>
<div class="t m" style="left:24px;top:307.0px">2D</div>
<svg class="ar" style="top:308.8px" width="4" height="6" viewBox="0 0 4 6"><path d="M0.6 0.5 L3.2 3 L0.6 5.5" fill="none" stroke="#333" stroke-width="0.95"/></svg>
<div class="t m" style="left:24px;top:321.0px">AI</div>
<svg class="ar" style="top:322.8px" width="4" height="6" viewBox="0 0 4 6"><path d="M0.6 0.5 L3.2 3 L0.6 5.5" fill="none" stroke="#333" stroke-width="0.95"/></svg>
<div class="t m" style="left:24px;top:335.0px">UI Toolkit</div>
<svg class="ar" style="top:336.8px" width="4" height="6" viewBox="0 0 4 6"><path d="M0.6 0.5 L3.2 3 L0.6 5.5" fill="none" stroke="#333" stroke-width="0.95"/></svg>
<div class="t m" style="left:24px;top:349.0px">Visual Scripting</div>
<svg class="ar" style="top:350.8px" width="4" height="6" viewBox="0 0 4 6"><path d="M0.6 0.5 L3.2 3 L0.6 5.5" fill="none" stroke="#333" stroke-width="0.95"/></svg>
</div>
</body></html>
